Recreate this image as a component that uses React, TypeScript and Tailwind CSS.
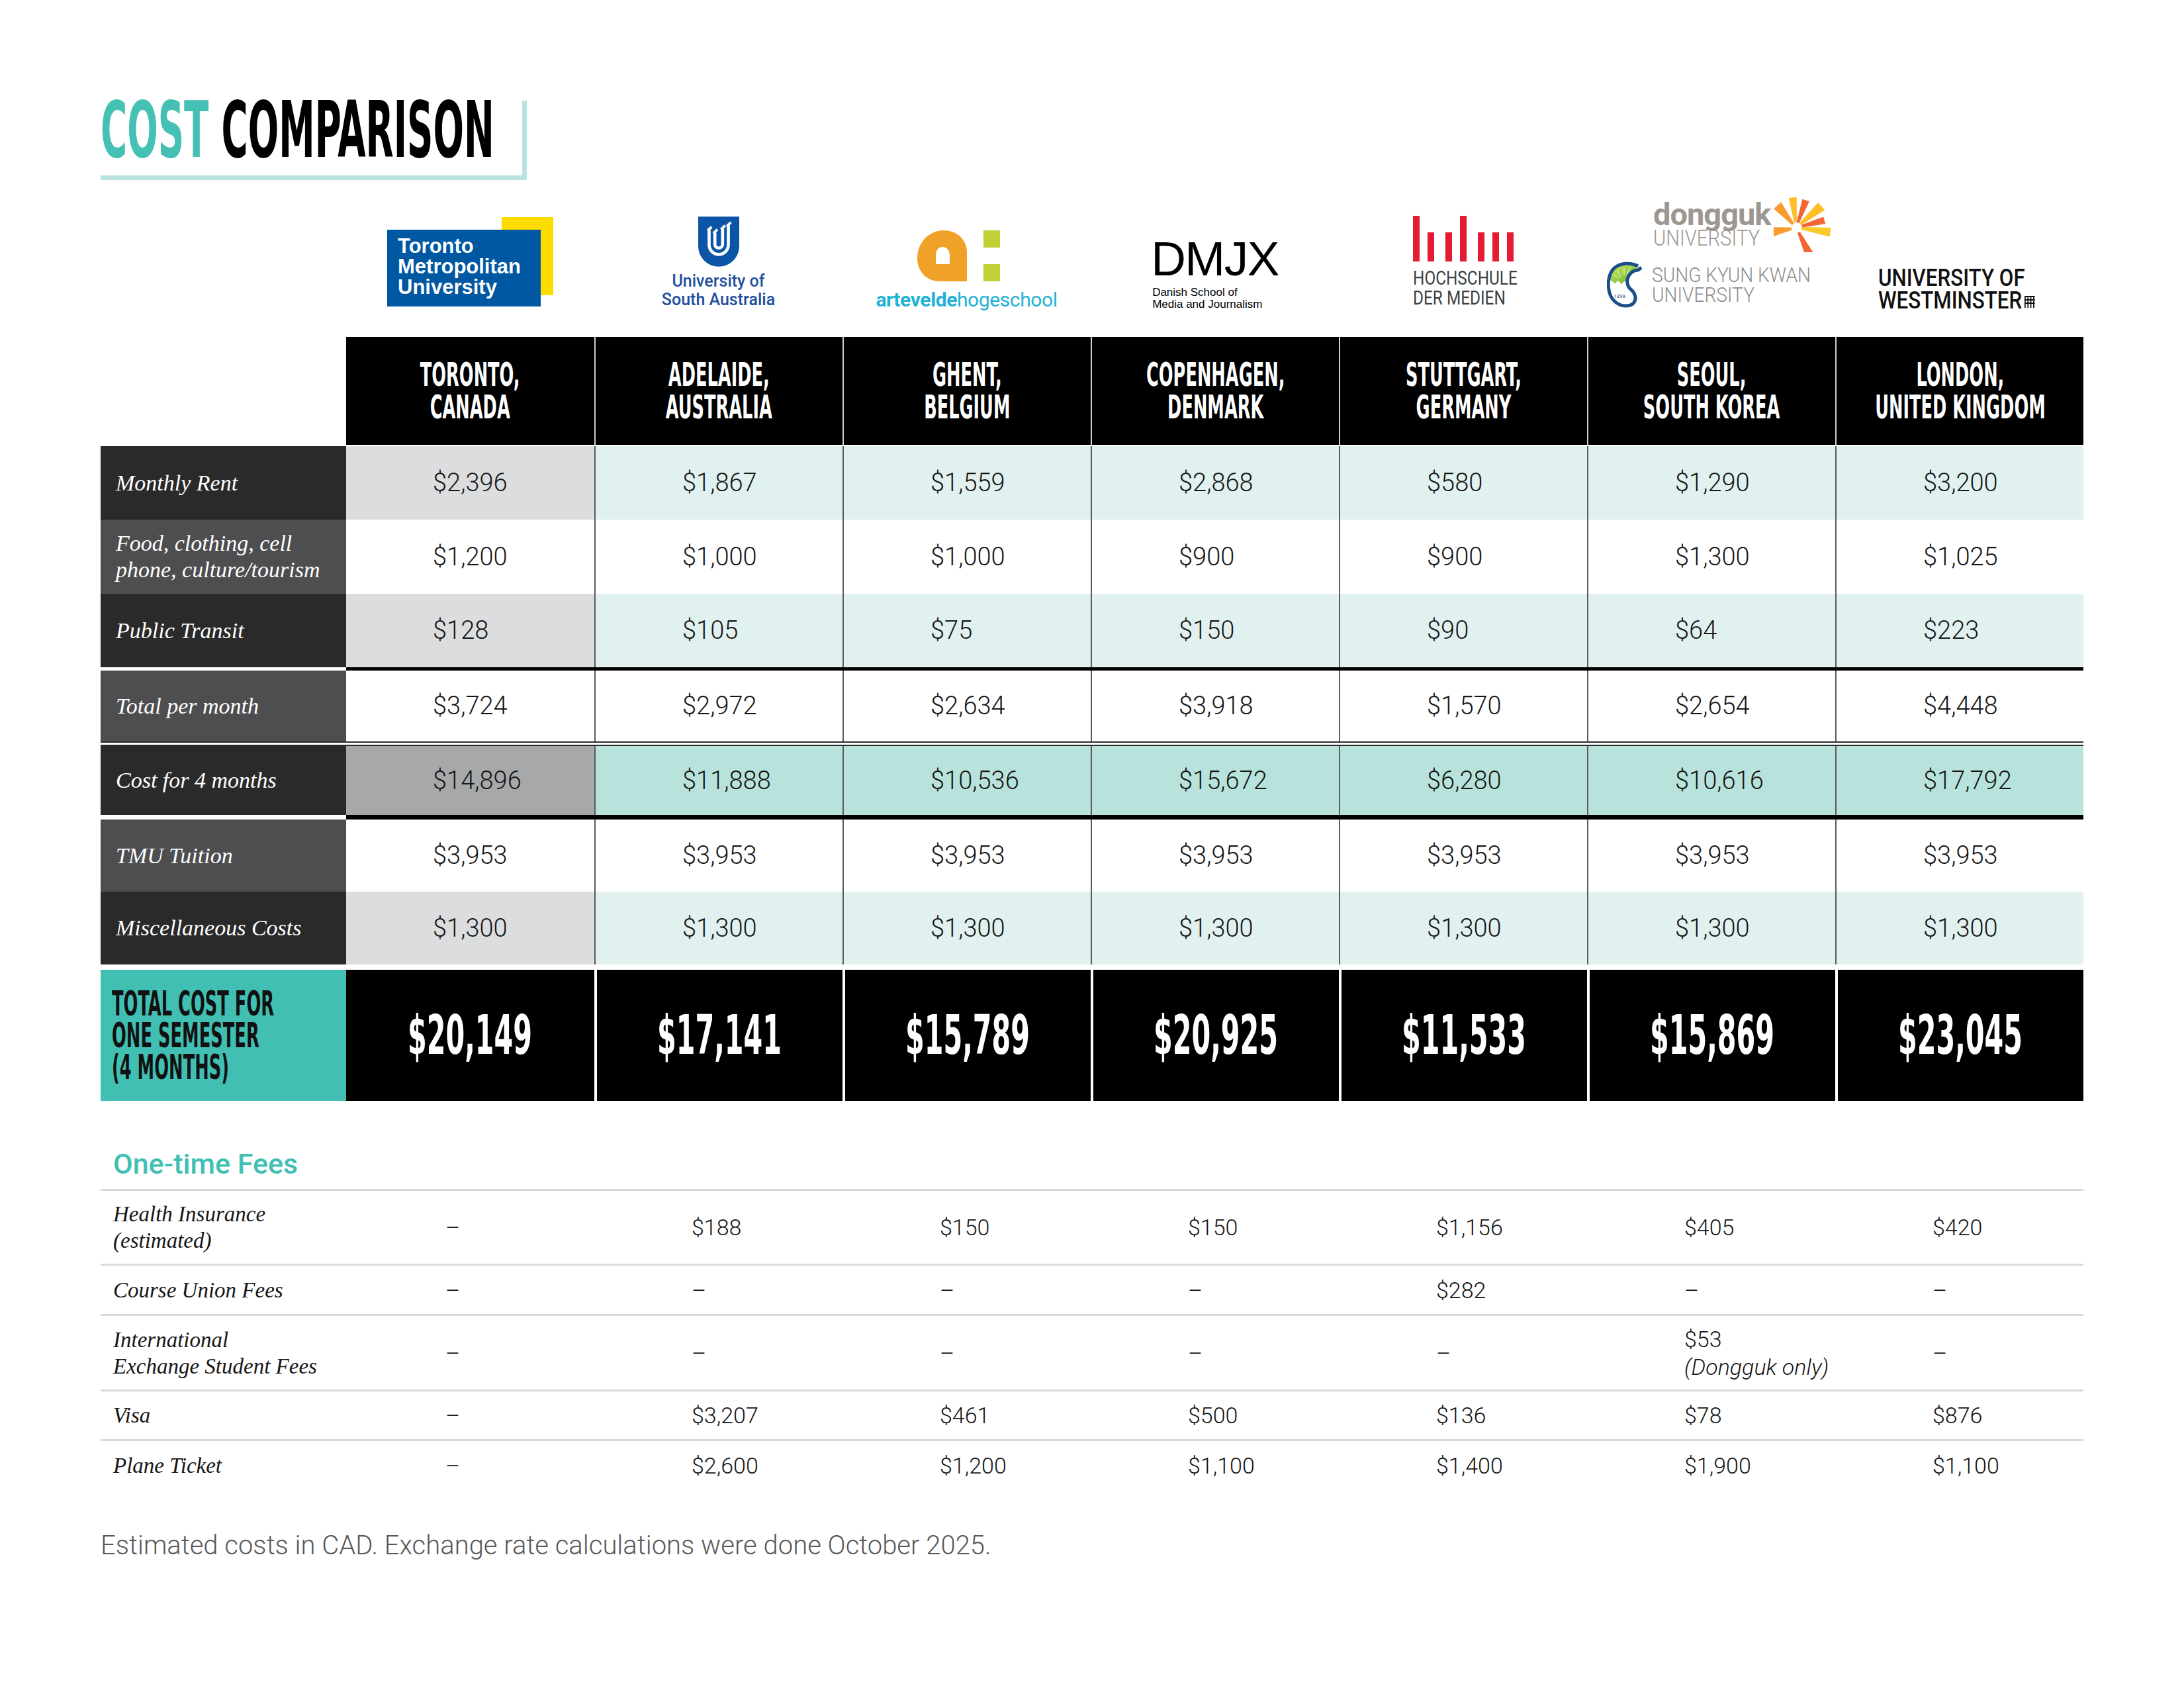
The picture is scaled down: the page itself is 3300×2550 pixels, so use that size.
import React from "react";

const GRID = "grid grid-cols-[371px_repeat(7,375px)]";

const HEADERS = [
  ["TORONTO,", "CANADA"],
  ["ADELAIDE,", "AUSTRALIA"],
  ["GHENT,", "BELGIUM"],
  ["COPENHAGEN,", "DENMARK"],
  ["STUTTGART,", "GERMANY"],
  ["SEOUL,", "SOUTH KOREA"],
  ["LONDON,", "UNITED KINGDOM"],
];

const TOTALS = ["$20,149", "$17,141", "$15,789", "$20,925", "$11,533", "$15,869", "$23,045"];

const FEES: { label: React.ReactNode; values: React.ReactNode[]; h: string }[] = [
  {
    label: (
      <>
        Health Insurance
        <br />
        (estimated)
      </>
    ),
    values: ["–", "$188", "$150", "$150", "$1,156", "$405", "$420"],
    h: "h-[113px]",
  },
  { label: "Course Union Fees", values: ["–", "–", "–", "–", "$282", "–", "–"], h: "h-[76px]" },
  {
    label: (
      <>
        International
        <br />
        Exchange Student Fees
      </>
    ),
    values: [
      "–",
      "–",
      "–",
      "–",
      "–",
      <>
        $53
        <br />
        <span className="italic">(Dongguk only)</span>
      </>,
      "–",
    ],
    h: "h-[114px]",
  },
  { label: "Visa", values: ["–", "$3,207", "$461", "$500", "$136", "$78", "$876"], h: "h-[75px]" },
  { label: "Plane Ticket", values: ["–", "$2,600", "$1,200", "$1,100", "$1,400", "$1,900", "$1,100"], h: "h-[76px]" },
];

function DataRow({
  label,
  values,
  labelCls,
  firstCls,
  restCls,
  h,
}: {
  label: React.ReactNode;
  values: string[];
  labelCls: string;
  firstCls: string;
  restCls: string;
  h: string;
}) {
  return (
    <div className={`${GRID} ${h}`}>
      <div className={`flex items-center pl-[23px] ${labelCls}`}>
        <span className="font-['Liberation_Serif',serif] italic text-[34px] leading-[40px] text-white">{label}</span>
      </div>
      {values.map((v, i) => (
        <div
          key={i}
          className={`flex items-center pl-[131px] ${i === 0 ? firstCls : restCls} ${i > 0 ? "border-l-2 border-[#5b5b5b]" : ""}`}
        >
          <span className="font-['Roboto',sans-serif] font-light text-[38px] text-[#161616]">{v}</span>
        </div>
      ))}
    </div>
  );
}

function Sunburst() {
  const rays = [
    { a: -132, c: "#f7941d", r1: 7, r2: 44, w: 15 },
    { a: -98, c: "#fdb913", r1: 8, r2: 46, w: 12 },
    { a: -72, c: "#f15a24", r1: 8, r2: 44, w: 11 },
    { a: -42, c: "#fdb913", r1: 8, r2: 50, w: 15 },
    { a: -16, c: "#f15a24", r1: 9, r2: 44, w: 11 },
    { a: 6, c: "#fcc419", r1: 8, r2: 52, w: 14 },
    { a: 62, c: "#f15a24", r1: 8, r2: 44, w: 13 },
    { a: 168, c: "#f7941d", r1: 7, r2: 36, w: 14 },
  ];
  const cx = 34;
  const cy = 46;
  return (
    <svg width="87" height="83" viewBox="0 0 87 83">
      {rays.map((r, i) => {
        const t = (r.a * Math.PI) / 180;
        const ux = Math.cos(t);
        const uy = Math.sin(t);
        const px = -uy;
        const py = ux;
        const pts = [
          [cx + ux * r.r1 + px * 2, cy + uy * r.r1 + py * 2],
          [cx + ux * r.r2 + px * r.w * 0.6, cy + uy * r.r2 + py * r.w * 0.6],
          [cx + ux * r.r2 - px * r.w * 0.4, cy + uy * r.r2 - py * r.w * 0.4],
          [cx + ux * r.r1 - px * 2, cy + uy * r.r1 - py * 2],
        ]
          .map((p) => p.map((n) => n.toFixed(1)).join(","))
          .join(" ");
        return <polygon key={i} points={pts} fill={r.c} fillOpacity="0.92" />;
      })}
    </svg>
  );
}

function SkkuEmblem() {
  return (
    <svg width="60" height="70" viewBox="0 0 60 70">
      <defs>
        <linearGradient id="skkuLeaf" x1="0" y1="0" x2="1" y2="1">
          <stop offset="0" stopColor="#d4e86a" />
          <stop offset="0.6" stopColor="#8cc63f" />
          <stop offset="1" stopColor="#3f9f45" />
        </linearGradient>
      </defs>
      <path d="M7 16C14 5 32 2 46 8L44 13C38 16 33 22 32 31L26 30L22 34L17 29L12 33L5 28C5 23 5 19 7 16Z" fill="url(#skkuLeaf)" />
      <path d="M11 21L18 25M16 14L21 23M26 10L26 21M35 9L30 20" stroke="#e8f4b0" strokeWidth="1.2" />
      <path
        d="M47 7C36 1 20 2 11 10C3 18 1 31 3 43C5 57 16 67 28 67C34 67 39 65 41 62C45 56 43 48 36 42C30 37 29 27 34 20C37 16 42 13 47 13L52 9"
        stroke="#1b4f88"
        strokeWidth="5"
        fill="none"
        strokeLinejoin="round"
      />
      <text x="10" y="55" fontSize="8" fill="#1b4f88" fontFamily="Roboto">
        1398
      </text>
    </svg>
  );
}

function Logos() {
  return (
    <div className={`${GRID} h-[237px]`}>
      <div />
      {/* TMU */}
      <div className="flex items-end justify-center pb-[46px]">
        <div className="relative w-[251px] h-[135px]">
          <div className="absolute right-0 top-0 w-[78px] h-[118px] bg-[#ffdc00]" />
          <div className="absolute left-0 bottom-0 w-[232px] h-[116px] bg-[#0058a2] pl-[16px] pt-[9px] font-['Liberation_Sans',sans-serif] font-bold text-[31px] leading-[31px] text-white">
            Toronto
            <br />
            Metropolitan
            <br />
            University
          </div>
        </div>
      </div>
      {/* UniSA */}
      <div className="flex flex-col items-center justify-end pb-[42px]">
        <svg width="62" height="76" viewBox="0 0 32 39">
          <path d="M0 0H32V23A16 16 0 0 1 0 23Z" fill="#0a55a5" />
          <path d="M8.5 10.5V22A7.5 7.5 0 0 0 23.5 22V7" stroke="#fff" strokeWidth="2.4" fill="none" />
          <path d="M13 12.5V21.5A3 3 0 0 0 19 21.5V9.5" stroke="#fff" strokeWidth="2.4" fill="none" />
          <path d="M7.3 11L10.5 8M11.8 13L15 10M22.3 7.5L25.5 4.5M17.8 10L21 7" stroke="#fff" strokeWidth="2" fill="none" />
        </svg>
        <div className="mt-[8px] text-center font-['Roboto',sans-serif] font-medium text-[25px] leading-[28px] text-[#1f4f9d]">
          University of
          <br />
          South Australia
        </div>
      </div>
      {/* Artevelde */}
      <div className="flex flex-col items-center justify-end pb-[40px]">
        <svg width="125" height="77" viewBox="0 0 125 77" className="mr-[24px]">
          <path d="M40 0C18 0 0 18 0 42C0 62 14 77 34 77L75 77L75 34C75 14 60 0 40 0Z" fill="#f0a128" />
          <path d="M28 51L49 51L49 38C49 30 44 25 38.5 25C32 25 28 30 28 38Z" fill="#fff" />
          <rect x="100" y="0" width="25" height="26" fill="#bfd136" />
          <rect x="100" y="51" width="25" height="26" fill="#bfd136" />
        </svg>
        <div className="mt-[12px] font-['Roboto',sans-serif] text-[30px] leading-[32px] tracking-[-0.4px] text-[#1fb2d5]">
          <span className="font-bold">artevelde</span>
          <span>hogeschool</span>
        </div>
      </div>
      {/* DMJX */}
      <div className="flex items-end justify-center pb-[40px]">
        <div className="flex flex-col">
          <div className="font-['Liberation_Sans',sans-serif] text-[73px] leading-[64px] tracking-[-1.5px] text-black">DMJX</div>
          <div className="mt-[10px] pl-[2px] font-['Liberation_Sans',sans-serif] text-[17px] leading-[18px] text-black">
            Danish School of
            <br />
            Media and Journalism
          </div>
        </div>
      </div>
      {/* HdM */}
      <div className="flex items-end justify-center pb-[44px]">
        <div className="w-[152px]">
          <svg width="152" height="69" viewBox="0 0 152 69">
            {[0, 22, 49, 71, 98, 120, 142].map((x, i) => (
              <rect key={i} x={x} y={i === 0 || i === 3 ? 0 : 25} width="10" height={i === 0 || i === 3 ? 69 : 44} fill="#e31b35" />
            ))}
          </svg>
          <div className="mt-[10px] whitespace-nowrap font-['Roboto',sans-serif] text-[29px] leading-[30px] text-[#3c4040]">
            <span className="inline-block origin-left scale-x-[0.84]">
              HOCHSCHULE
              <br />
              DER MEDIEN
            </span>
          </div>
        </div>
      </div>
      {/* Dongguk + SKKU */}
      <div className="flex flex-col items-center justify-end pb-[44px]">
        <div className="flex items-center pl-[94px]">
          <div className="flex flex-col w-[182px] font-['Roboto',sans-serif] text-[#9d9791]">
            <span className="font-bold text-[47px] leading-[38px] tracking-[-1px]">dongguk</span>
            <span className="inline-block origin-left scale-x-[0.86] whitespace-nowrap font-light text-[34px] leading-[32px]">UNIVERSITY</span>
          </div>
          <Sunburst />
        </div>
        <div className="mt-[14px] flex items-center">
          <SkkuEmblem />
          <div className="ml-[8px] flex flex-col w-[248px] whitespace-nowrap font-['Roboto',sans-serif] font-light text-[32px] leading-[30px] text-[#8b8d8f]">
            <span className="inline-block origin-left scale-x-[0.88]">SUNG KYUN KWAN</span>
            <span className="inline-block origin-left scale-x-[0.88]">UNIVERSITY</span>
          </div>
        </div>
      </div>
      {/* Westminster */}
      <div className="flex items-end justify-center pb-[38px]">
        <div className="w-[245px] whitespace-nowrap font-['Roboto',sans-serif] font-medium text-[36px] leading-[34px] text-[#111]">
          <div className="inline-block origin-left scale-x-[0.87]">
            UNIVERSITY OF
            <br />
            WESTMINSTER
            <svg width="20" height="20" viewBox="0 0 10 10" className="ml-[3px] inline-block align-baseline">
              <path d="M0.5 1H9.5M0.5 3.5H9.5M0.5 6H9.5M1 0.5V9.5M3.5 1V9.5M6 1V9.5M8.5 1V9.5" stroke="#111" strokeWidth="1" />
            </svg>
          </div>
        </div>
      </div>
    </div>
  );
}

export default function App() {
  return (
    <div className="w-[3300px] h-[2550px] overflow-hidden bg-white pl-[152px] pt-[152px]">
      {/* Title */}
      <div className="w-[644px] h-[120px] border-r-[7px] border-b-[7px] border-[#b9e3de] rounded-br-[3px]">
        <div className="whitespace-nowrap font-['DejaVu_Sans_Condensed','DejaVu_Sans',sans-serif] font-bold text-[117px] leading-[90px]">
          <span className="inline-block origin-left scale-x-[0.52]">
            <span className="text-[#44c1b4]">COST</span> <span className="text-black">COMPARISON</span>
          </span>
        </div>
      </div>

      <Logos />

      {/* Header */}
      <div className={`${GRID} h-[163px]`}>
        <div className="bg-white" />
        {HEADERS.map((h, i) => (
          <div
            key={i}
            className={`flex items-center justify-center bg-black ${i > 0 ? "border-l-2 border-[#cfcfcf]" : ""}`}
          >
            <span className="inline-block scale-x-[0.57] whitespace-nowrap text-center font-['DejaVu_Sans_Condensed','DejaVu_Sans',sans-serif] font-bold text-[50px] leading-[49px] text-white">
              {h[0]}
              <br />
              {h[1]}
            </span>
          </div>
        ))}
      </div>

      <div className="h-[2px] w-[2996px] bg-white" />

      <DataRow
        label="Monthly Rent"
        values={["$2,396", "$1,867", "$1,559", "$2,868", "$580", "$1,290", "$3,200"]}
        labelCls="bg-[#2a2a2a]"
        firstCls="bg-[#dcdddf]"
        restCls="bg-[#e1f1ef]"
        h="h-[111px]"
      />
      <DataRow
        label={
          <>
            Food, clothing, cell
            <br />
            phone, culture/tourism
          </>
        }
        values={["$1,200", "$1,000", "$1,000", "$900", "$900", "$1,300", "$1,025"]}
        labelCls="bg-[#4e4e50]"
        firstCls="bg-white"
        restCls="bg-white"
        h="h-[112px]"
      />
      <DataRow
        label="Public Transit"
        values={["$128", "$105", "$75", "$150", "$90", "$64", "$223"]}
        labelCls="bg-[#2a2a2a]"
        firstCls="bg-[#dcdddf]"
        restCls="bg-[#e1f1ef]"
        h="h-[111px]"
      />
      <div className={`${GRID} h-[5px]`}>
        <div className="bg-white" />
        <div className="col-span-7 bg-black" />
      </div>
      <DataRow
        label="Total per month"
        values={["$3,724", "$2,972", "$2,634", "$3,918", "$1,570", "$2,654", "$4,448"]}
        labelCls="bg-[#4e4e50]"
        firstCls="bg-white"
        restCls="bg-white"
        h="h-[107px]"
      />
      <div className="h-[7px] w-[2996px] border-y-[2px] border-[#2b2b2b] bg-white" />
      <DataRow
        label="Cost for 4 months"
        values={["$14,896", "$11,888", "$10,536", "$15,672", "$6,280", "$10,616", "$17,792"]}
        labelCls="bg-[#2a2a2a]"
        firstCls="bg-[#a7a8aa]"
        restCls="bg-[#b8e2dc]"
        h="h-[104px]"
      />
      <div className={`${GRID} h-[7px]`}>
        <div className="bg-white" />
        <div className="col-span-7 bg-black" />
      </div>
      <DataRow
        label="TMU Tuition"
        values={Array(7).fill("$3,953")}
        labelCls="bg-[#4e4e50]"
        firstCls="bg-white"
        restCls="bg-white"
        h="h-[109px]"
      />
      <DataRow
        label="Miscellaneous Costs"
        values={Array(7).fill("$1,300")}
        labelCls="bg-[#2a2a2a]"
        firstCls="bg-[#dcdddf]"
        restCls="bg-[#e1f1ef]"
        h="h-[110px]"
      />
      <div className="h-[8px]" />

      {/* Total */}
      <div className={`${GRID} h-[198px]`}>
        <div className="flex items-center pl-[17px] bg-[#41bfb3]">
          <span className="inline-block origin-left scale-x-[0.55] whitespace-nowrap font-['DejaVu_Sans_Condensed','DejaVu_Sans',sans-serif] font-bold text-[52px] leading-[48px] text-[#111]">
            TOTAL COST FOR
            <br />
            ONE SEMESTER
            <br />
            (4 MONTHS)
          </span>
        </div>
        {TOTALS.map((t, i) => (
          <div key={i} className={`flex items-center justify-center bg-black ${i > 0 ? "border-l-4 border-white" : ""}`}>
            <span className="inline-block scale-x-[0.56] whitespace-nowrap font-['DejaVu_Sans_Condensed','DejaVu_Sans',sans-serif] font-bold text-[82px] leading-none text-white">
              {t}
            </span>
          </div>
        ))}
      </div>

      {/* One-time fees */}
      <div className="mt-[71px] h-[62px] pl-[19px] font-['Roboto',sans-serif] font-medium text-[43px] leading-[48px] text-[#41bfb3]">
        One-time Fees
      </div>
      <div className="w-[2996px]">
        {FEES.map((f, r) => (
          <div key={r} className={`${GRID} ${f.h} border-t-[3px] border-[#dadada]`}>
            <div className="flex items-center pl-[19px] font-['Liberation_Serif',serif] italic text-[33px] leading-[40px] text-[#161616]">
              <span>{f.label}</span>
            </div>
            {f.values.map((v, i) => (
              <div
                key={i}
                className={`flex items-center ${i === 0 ? "pl-[150px]" : "pl-[147px]"} font-['Roboto',sans-serif] font-light text-[34px] leading-[42px] text-[#161616]`}
              >
                <span>{v}</span>
              </div>
            ))}
          </div>
        ))}
      </div>

      <div className="mt-[61px] font-['Roboto',sans-serif] font-light text-[40px] leading-[48px] text-[#58595b]">
        Estimated costs in CAD. Exchange rate calculations were done October 2025.
      </div>
    </div>
  );
}
